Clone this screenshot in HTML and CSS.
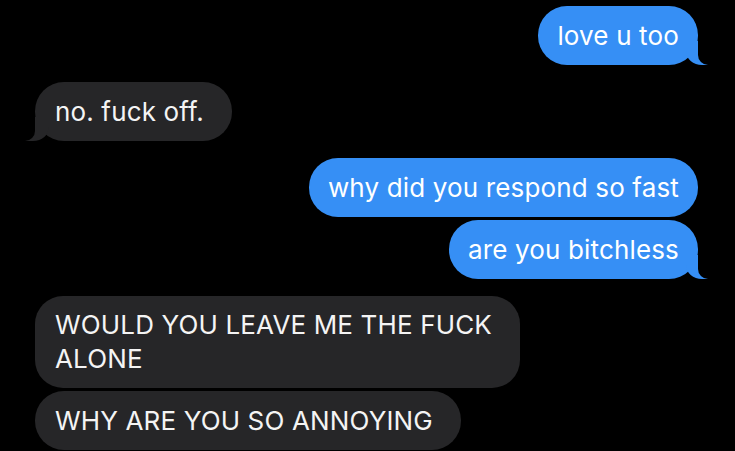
FILE: index.html
```html
<!DOCTYPE html>
<html lang="en">
<head>
<meta charset="utf-8">
<title>Messages</title>
<link rel="stylesheet" href="styles.css">
</head>
<body>
<main class="thread">
  <div class="bubble sent tail">love u too</div>
  <div class="bubble recv tail gap">no. fuck off.</div>
  <div class="bubble sent gap">why did you respond so fast</div>
  <div class="bubble sent tail">are you bitchless</div>
  <div class="bubble recv gap wide">WOULD YOU LEAVE ME THE FUCK<br>ALONE</div>
  <div class="bubble recv">WHY ARE YOU SO ANNOYING</div>
</main>
</body>
</html>
```

FILE: styles.css
```css
html, body {
  margin: 0;
  padding: 0;
  background: #000;
}

.thread {
  display: flex;
  flex-direction: column;
  gap: 3px;
  padding: 6px 37px 0 35px;
  font-family: "Inter", "Liberation Sans", sans-serif;
  font-size: 26px;
  line-height: 32px;
  letter-spacing: 0.15px;
  color: #fff;
}

.bubble {
  position: relative;
  padding: 14px 19px 13px;
  border-radius: 29px;
  white-space: nowrap;
}

.bubble.gap {
  margin-top: 14px;
}

.sent {
  align-self: flex-end;
  background: #368ff5;
}

.recv {
  align-self: flex-start;
  background: #262628;
  color: #f4f4f4;
  padding-left: 20px;
  padding-right: 28px;
}

.bubble.wide {
  line-height: 34px;
  padding-top: 12px;
  padding-bottom: 12px;
  border-radius: 28px;
}

.tail::before,
.tail::after {
  content: "";
  position: absolute;
  bottom: 0;
}

.sent.tail::before {
  right: -12px;
  width: 24px;
  height: 24px;
  background: #368ff5;
  border-bottom-left-radius: 16px 14px;
}

.sent.tail::after {
  right: -14px;
  width: 14px;
  height: 26px;
  background: #000;
  border-bottom-left-radius: 10px;
}

.recv.tail::before {
  left: -10px;
  width: 24px;
  height: 24px;
  background: #262628;
  border-bottom-right-radius: 16px 14px;
}

.recv.tail::after {
  left: -14px;
  width: 14px;
  height: 26px;
  background: #000;
  border-bottom-right-radius: 10px;
}
```
